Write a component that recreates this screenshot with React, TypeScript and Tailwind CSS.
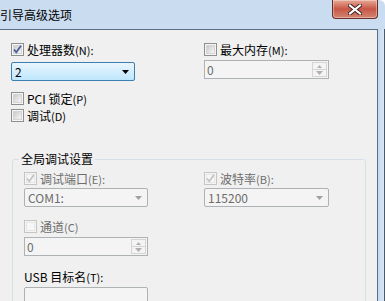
import React from 'react'

const FONT = 'font-["SimSun","Noto_Sans_CJK_SC",sans-serif]'

/** Win7-style checkbox, 13x13 */
function Check({ checked = false, disabled = false }: { checked?: boolean; disabled?: boolean }) {
  return (
    <span
      className={`relative flex h-[13px] w-[13px] shrink-0 items-center justify-center border ${
        disabled ? 'border-[#c5c5c5] bg-[#f4f4f4]' : 'border-[#8e8f8f] bg-[#f5f5f5]'
      }`}
    >
      <span
        className={`absolute inset-[1px] border ${
          disabled
            ? 'border-[#e6e6e6] bg-[#f7f7f7]'
            : 'border-[#d4d4d4] bg-gradient-to-br from-[#cbcbcb] to-[#f6f6f6]'
        }`}
      />
      {checked && (
        <svg viewBox="0 0 11 11" className="relative h-[11px] w-[11px]">
          <path
            d="M2 5.5 L4.3 8.3 L9 1.8"
            fill="none"
            stroke={disabled ? '#c4c4c4' : '#4a5f97'}
            strokeWidth="1.8"
          />
        </svg>
      )}
    </span>
  )
}

function CheckLabel({
  label,
  hot,
  checked,
  disabled,
  cjkGray,
}: {
  label: string
  hot: string
  checked?: boolean
  disabled?: boolean
  cjkGray?: boolean
}) {
  const color = disabled || cjkGray ? 'text-[#6d6d6d]' : 'text-black'
  return (
    <div className="flex h-[13px] items-center gap-[3px]">
      <Check checked={checked} disabled={disabled} />
      <span className={`text-[12px] leading-[13px] whitespace-nowrap ${color}`}>
        {label}
        <span className="text-[11px]">{hot}</span>
      </span>
    </div>
  )
}

function ArrowDown({ color }: { color: string }) {
  return (
    <svg viewBox="0 0 7 4" className="h-[4px] w-[7px]">
      <path d="M0 0 H7 L3.5 4 Z" fill={color} />
    </svg>
  )
}

function Combo({ value, active, w }: { value: string; active?: boolean; w: string }) {
  return (
    <div
      className={`flex h-[19px] items-center justify-between rounded-[2px] border pl-[3px] pr-[5px] ${w} ${
        active
          ? 'border-[#3c7fb1] bg-gradient-to-b from-[#eaf6fd] to-[#bee6fd] text-black'
          : 'border-[#adb2b5] bg-[#f4f4f4] text-[#6d6d6d]'
      }`}
    >
      <span className="text-[12px] leading-none">{value}</span>
      <ArrowDown color={active ? '#000' : '#a0a0a0'} />
    </div>
  )
}

function Spin({ value, w }: { value: string; w: string }) {
  return (
    <div className={`flex h-[19px] items-stretch border border-[#adb2b5] bg-[#f4f4f4] ${w}`}>
      <span className="flex flex-1 items-center pl-[2px] text-[12px] leading-none text-[#6d6d6d]">
        {value}
      </span>
      <div className="my-[1px] mr-[1px] flex w-[15px] flex-col border border-[#d5d5d5]">
        <div className="flex flex-1 items-center justify-center border-b border-[#d5d5d5]">
          <svg viewBox="0 0 5 3" className="h-[3px] w-[5px]">
            <path d="M0 3 H5 L2.5 0 Z" fill="#b0b0b0" />
          </svg>
        </div>
        <div className="flex flex-1 items-center justify-center">
          <ArrowDown color="#b0b0b0" />
        </div>
      </div>
    </div>
  )
}

export default function App() {
  return (
    <div
      className={`relative h-[301px] w-[385px] overflow-hidden rounded-tr-[6px] bg-gradient-to-b from-[#c9dcf0] to-[#dae8f6] ${FONT}`}
    >
      {/* Title bar */}
      <div className="flex h-[29px] items-start justify-between">
        <span className="pt-[8px] text-[12px] leading-[14px] text-black">引导高级选项</span>
        <div className="mr-[7px] flex h-[19px] w-[46px] items-center justify-center rounded-b-[4px] border border-t-0 border-[#6b2f2a] bg-gradient-to-b from-[#e6a996] via-[#c75646] to-[#d38571] shadow-[inset_0_0_0_1px_rgba(255,255,255,0.35)]">
          <svg viewBox="0 0 14 11" className="h-[11px] w-[14px]">
            <path d="M2 1.5 L12 9.5 M12 1.5 L2 9.5" stroke="#3a1e1a" strokeWidth="4" strokeLinecap="square" />
            <path d="M2 1.5 L12 9.5 M12 1.5 L2 9.5" stroke="#fff" strokeWidth="2.2" strokeLinecap="square" />
          </svg>
        </div>
      </div>

      {/* Body */}
      <div className="flex h-[272px]">
        <div className="w-[378px] border-t border-r border-[#5c6f86] bg-[#f0f0f0] pl-[11px] pt-[13px] text-black">
          {/* processors / memory */}
          <div className="flex">
            <div className="w-[193px]">
              <CheckLabel label="处理器数" hot="(N):" checked />
              <div className="mt-[6px]">
                <Combo value="2" active w="w-[124px]" />
              </div>
            </div>
            <div>
              <CheckLabel label="最大内存" hot="(M):" />
              <div className="mt-[4px]">
                <Spin value="0" w="w-[125px]" />
              </div>
            </div>
          </div>

          <div className="mt-[11px] flex flex-col gap-[4px]">
            <CheckLabel label="PCI 锁定" hot="(P)" />
            <CheckLabel label="调试" hot="(D)" />
          </div>

          {/* Group box */}
          <div className="relative mt-[37px] ml-[1px] h-[200px] w-[354px] rounded-[3px] border border-[#d5dfe5] pl-[11px] pt-[12px]">
            <span className="absolute -top-[8px] left-[6px] bg-[#f0f0f0] px-[2px] text-[12px] leading-[14px] text-black">
              全局调试设置
            </span>
            <div className="flex">
              <div className="w-[180px]">
                <CheckLabel label="调试端口" hot="(E):" checked disabled />
                <div className="mt-[3px]">
                  <Combo value="COM1:" w="w-[124px]" />
                </div>
                <div className="mt-[13px]">
                  <CheckLabel label="通道" hot="(C)" disabled />
                </div>
                <div className="mt-[4px]">
                  <Spin value="0" w="w-[124px]" />
                </div>
                <div className="mt-[14px] text-[12px] leading-[13px] text-black">
                  USB 目标名<span className="text-[11px]">(T):</span>
                </div>
                <div className="mt-[3px] h-[30px] w-[124px] rounded-[2px] border border-[#adb2b5] bg-[#f4f4f4]" />
              </div>
              <div>
                <CheckLabel label="波特率" hot="(B):" checked disabled />
                <div className="mt-[3px]">
                  <Combo value="115200" w="w-[125px]" />
                </div>
              </div>
            </div>
          </div>
        </div>
        {/* right frame */}
        <div className="w-[7px] border-r border-[#4b5a6b] bg-gradient-to-r from-[#c3d9f1] to-[#d8e6f5]" />
      </div>
    </div>
  )
}
